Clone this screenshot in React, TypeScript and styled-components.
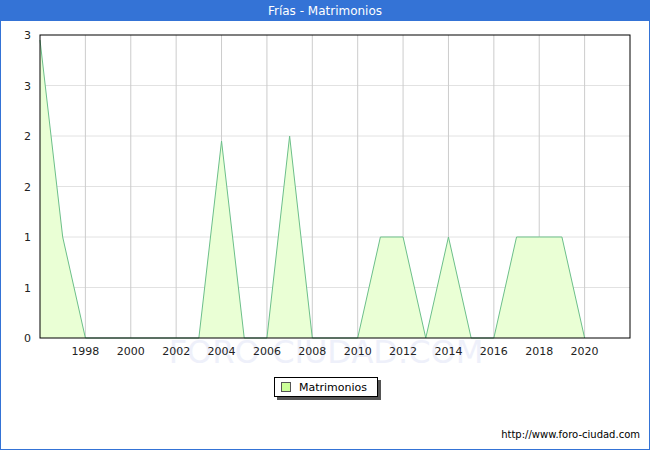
import React from "react";
import styled, { createGlobalStyle } from "styled-components";

const G = createGlobalStyle`
  html, body { margin: 0; padding: 0; background: #fff; }
  body { font-family: "DejaVu Sans", Verdana, sans-serif; }
`;

const Frame = styled.div`
  width: 650px; height: 450px; box-sizing: border-box;
  border: 1px solid #3473d6; border-top: none;
  display: flex; flex-direction: column; background: #fff;
`;
const Title = styled.div`
  height: 21px; background: #3473d6; color: #fff; font-size: 12px;
  display: flex; align-items: center; justify-content: center; margin: 0 -1px;
`;
const Legend = styled.div`
  align-self: center; margin-top: 11px; margin-left: 2px;
  display: flex; align-items: center; gap: 8px;
  border: 1px solid #000; box-shadow: 3px 3px 0 #555;
  padding: 2px 10px 2px 6px; font-size: 11px; height: 14px;
`;
const Swatch = styled.span`
  width: 8px; height: 8px; background: #ccff99; border: 1px solid #555;
`;
const Footer = styled.div`
  margin-top: auto; align-self: flex-end; font-size: 10px; padding: 0 9px 9px 0;
`;

const X0 = 39, X1 = 629, Y0 = 14, Y1 = 317;
const x = (yr: number) => X0 + ((yr - 1996) / 26) * (X1 - X0);
const y = (v: number) => Y1 - (v / 3) * (Y1 - Y0);
const data: [number, number][] = [
  [1996, 2.95], [1997, 1], [1998, 0], [2003, 0], [2004, 1.95], [2005, 0], [2006, 0],
  [2007, 2], [2008, 0], [2010, 0], [2011, 1], [2012, 1], [2013, 0], [2014, 1], [2015, 0],
  [2016, 0], [2017, 1], [2018, 1], [2019, 1], [2020, 0],
];

const Chart = () => {
  const line = data.map(([a, b]) => `${x(a)},${y(b)}`).join(" ");
  const area = `${x(1996)},${y(0)} ${line} ${x(2020)},${y(0)}`;
  const years = [1998, 2000, 2002, 2004, 2006, 2008, 2010, 2012, 2014, 2016, 2018, 2020];
  const ylabels = ["0", "1", "1", "2", "2", "3", "3"];
  return (
    <svg width="648" height="345" style={{ display: "block" }}>
      <text x="325" y="342" textAnchor="middle" fontSize="32" fill="#eef0fa"
        fontFamily="DejaVu Sans, sans-serif">FORO-CIUDAD.COM</text>
      {[0.5, 1, 1.5, 2, 2.5].map(v => (
        <line key={v} x1={X0} x2={X1} y1={y(v)} y2={y(v)} stroke="#e2e2e2" />
      ))}
      {years.map(yr => (
        <line key={yr} x1={x(yr)} x2={x(yr)} y1={Y0} y2={Y1} stroke="#cccccc" />
      ))}
      <polygon points={area} fill="#eaffd5" />
      <polyline points={line} fill="none" stroke="#6cbf8a" strokeWidth="1" />
      <rect x={X0} y={Y0} width={X1 - X0} height={Y1 - Y0} fill="none" stroke="#000" />
      {ylabels.map((l, i) => (
        <text key={i} x="30" y={y(i * 0.5) + 4} textAnchor="end" fontSize="11" fill="#222">{l}</text>
      ))}
      {years.map(yr => (
        <text key={yr} x={x(yr)} y="334" textAnchor="middle" fontSize="11" fill="#222">{yr}</text>
      ))}
    </svg>
  );
};

export default function App() {
  return (
    <>
      <G />
      <Frame>
        <Title>Frías - Matrimonios</Title>
        <Chart />
        <Legend><Swatch />Matrimonios</Legend>
        <Footer>http://www.foro-ciudad.com</Footer>
      </Frame>
    </>
  );
}
